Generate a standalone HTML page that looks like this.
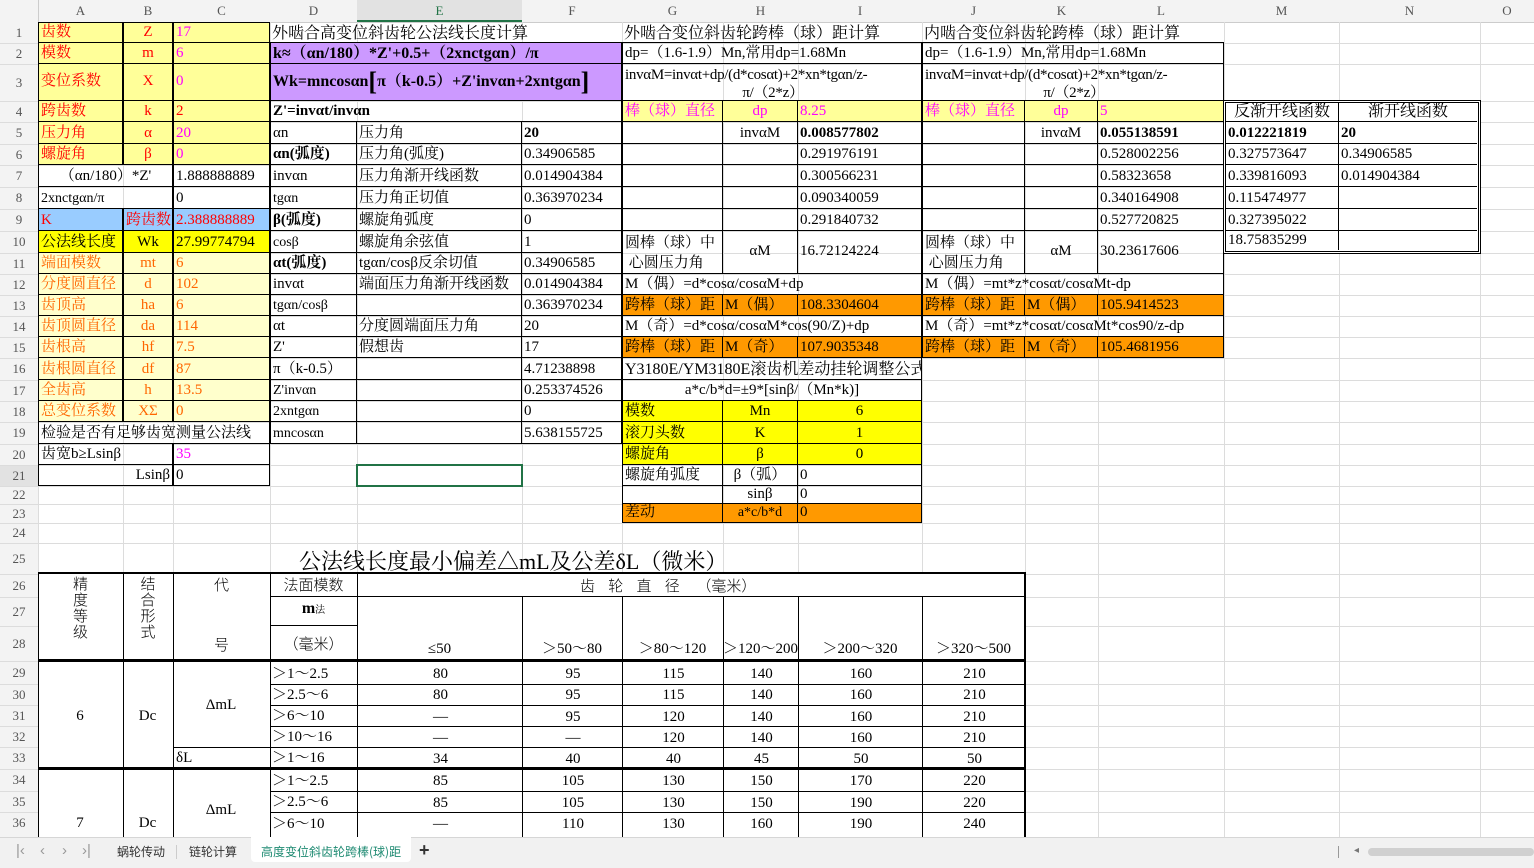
<!DOCTYPE html>
<html><head><meta charset="utf-8">
<style>
*{margin:0;padding:0}
body{width:1534px;height:867px;position:relative;overflow:hidden;background:#fff;font-family:"Liberation Serif","Noto Serif CJK SC",serif;font-size:15px;color:#000}
.gh{position:absolute;left:0;width:1534px;height:1px;background:#dcdcdc}
.gv{position:absolute;top:22px;width:1px;height:816px;background:#dcdcdc}
.c{position:absolute;box-sizing:border-box;border:1px solid #000;overflow:hidden;white-space:nowrap;display:flex;align-items:flex-end;padding:0 0 1px 2px;line-height:17px;margin:-1px 0 0 -1px}
.n{border:none}
.ct{justify-content:center;padding-left:0}
.r{justify-content:flex-end;padding-right:2px}
.y{background:#ffff99;color:#f00}
.yy{background:#ffff00}
.o{background:#ff9900}
.p{background:#cc99ff;font-weight:bold}
.lo{background:#ffffcc;color:#ff6600}
.m{color:#f0f}
.b{font-weight:bold}
.hd{position:absolute;top:0;height:22px;line-height:22px;text-align:center;color:#555;font-size:13px;font-family:"Liberation Serif",serif}
.rh{position:absolute;left:0;width:38px;text-align:center;color:#555;font-size:13px;font-family:"Liberation Serif",serif}
</style></head><body>
<div style="position:absolute;left:0;top:0;width:1534px;height:22px;background:#f3f3f3;border-bottom:1px solid #ccc"></div>
<div style="position:absolute;left:0;top:0;width:38px;height:867px;background:#f3f3f3;border-right:1px solid #ccc"></div>
<div style="position:absolute;left:357px;top:0;width:165px;height:22px;background:#e2e2e2;border-bottom:2px solid #217346;box-sizing:border-box"></div>
<div style="position:absolute;left:0;top:465px;width:38px;height:21px;background:#e2e2e2"></div>
<div class="hd" style="left:38px;width:85px">A</div><div class="hd" style="left:123px;width:50px">B</div><div class="hd" style="left:173px;width:97px">C</div><div class="hd" style="left:270px;width:87px">D</div><div class="hd" style="left:357px;width:165px;color:#217346">E</div><div class="hd" style="left:522px;width:100px">F</div><div class="hd" style="left:622px;width:101px">G</div><div class="hd" style="left:723px;width:75px">H</div><div class="hd" style="left:798px;width:124px">I</div><div class="hd" style="left:922px;width:103px">J</div><div class="hd" style="left:1025px;width:73px">K</div><div class="hd" style="left:1098px;width:126px">L</div><div class="hd" style="left:1224px;width:115px">M</div><div class="hd" style="left:1339px;width:141px">N</div><div class="hd" style="left:1480px;width:54px">O</div>
<div class="gv" style="left:38px"></div><div class="gv" style="left:123px"></div><div class="gv" style="left:173px"></div><div class="gv" style="left:270px"></div><div class="gv" style="left:357px"></div><div class="gv" style="left:522px"></div><div class="gv" style="left:622px"></div><div class="gv" style="left:723px"></div><div class="gv" style="left:798px"></div><div class="gv" style="left:922px"></div><div class="gv" style="left:1025px"></div><div class="gv" style="left:1098px"></div><div class="gv" style="left:1224px"></div><div class="gv" style="left:1339px"></div><div class="gv" style="left:1480px"></div>
<div class="gh" style="top:43px"></div><div class="gh" style="top:64px"></div><div class="gh" style="top:101px"></div><div class="gh" style="top:122px"></div><div class="gh" style="top:144px"></div><div class="gh" style="top:165px"></div><div class="gh" style="top:187px"></div><div class="gh" style="top:209px"></div><div class="gh" style="top:231px"></div><div class="gh" style="top:253px"></div><div class="gh" style="top:274px"></div><div class="gh" style="top:295px"></div><div class="gh" style="top:316px"></div><div class="gh" style="top:337px"></div><div class="gh" style="top:358px"></div><div class="gh" style="top:380px"></div><div class="gh" style="top:401px"></div><div class="gh" style="top:422px"></div><div class="gh" style="top:444px"></div><div class="gh" style="top:465px"></div><div class="gh" style="top:486px"></div><div class="gh" style="top:504px"></div><div class="gh" style="top:523px"></div><div class="gh" style="top:543px"></div><div class="gh" style="top:574px"></div><div class="gh" style="top:597px"></div><div class="gh" style="top:626px"></div><div class="gh" style="top:661px"></div><div class="gh" style="top:684px"></div><div class="gh" style="top:705px"></div><div class="gh" style="top:726px"></div><div class="gh" style="top:747px"></div><div class="gh" style="top:769px"></div><div class="gh" style="top:791px"></div><div class="gh" style="top:812px"></div>
<div class="rh" style="top:23px;line-height:20px">1</div><div class="rh" style="top:43px;line-height:21px">2</div><div class="rh" style="top:64px;line-height:37px">3</div><div class="rh" style="top:101px;line-height:21px">4</div><div class="rh" style="top:122px;line-height:22px">5</div><div class="rh" style="top:144px;line-height:21px">6</div><div class="rh" style="top:165px;line-height:22px">7</div><div class="rh" style="top:187px;line-height:22px">8</div><div class="rh" style="top:209px;line-height:22px">9</div><div class="rh" style="top:231px;line-height:22px">10</div><div class="rh" style="top:253px;line-height:21px">11</div><div class="rh" style="top:274px;line-height:21px">12</div><div class="rh" style="top:295px;line-height:21px">13</div><div class="rh" style="top:316px;line-height:21px">14</div><div class="rh" style="top:337px;line-height:21px">15</div><div class="rh" style="top:358px;line-height:22px">16</div><div class="rh" style="top:380px;line-height:21px">17</div><div class="rh" style="top:401px;line-height:21px">18</div><div class="rh" style="top:422px;line-height:22px">19</div><div class="rh" style="top:444px;line-height:21px">20</div><div class="rh" style="top:465px;line-height:21px">21</div><div class="rh" style="top:486px;line-height:18px">22</div><div class="rh" style="top:504px;line-height:19px">23</div><div class="rh" style="top:523px;line-height:20px">24</div><div class="rh" style="top:543px;line-height:31px">25</div><div class="rh" style="top:574px;line-height:23px">26</div><div class="rh" style="top:597px;line-height:29px">27</div><div class="rh" style="top:626px;line-height:35px">28</div><div class="rh" style="top:661px;line-height:23px">29</div><div class="rh" style="top:684px;line-height:21px">30</div><div class="rh" style="top:705px;line-height:21px">31</div><div class="rh" style="top:726px;line-height:21px">32</div><div class="rh" style="top:747px;line-height:22px">33</div><div class="rh" style="top:769px;line-height:22px">34</div><div class="rh" style="top:791px;line-height:21px">35</div><div class="rh" style="top:812px;line-height:22px">36</div>

<div class="c y" style="left:39px;top:23px;width:85px;height:21px">齿数</div><div class="c y ct" style="left:124px;top:23px;width:50px;height:21px">Z</div><div class="c y m" style="left:174px;top:23px;width:97px;height:21px">17</div>
<div class="c y" style="left:39px;top:43px;width:85px;height:22px">模数</div><div class="c y ct" style="left:124px;top:43px;width:50px;height:22px">m</div><div class="c y m" style="left:174px;top:43px;width:97px;height:22px">6</div>
<div class="c y" style="left:39px;top:64px;width:85px;height:38px;align-items:center">变位系数</div><div class="c y ct" style="left:124px;top:64px;width:50px;height:38px;align-items:center">X</div><div class="c y m" style="left:174px;top:64px;width:97px;height:38px;align-items:center">0</div>
<div class="c y" style="left:39px;top:101px;width:85px;height:22px">跨齿数</div><div class="c y ct" style="left:124px;top:101px;width:50px;height:22px">k</div><div class="c y" style="left:174px;top:101px;width:97px;height:22px">2</div>
<div class="c y" style="left:39px;top:122px;width:85px;height:23px">压力角</div><div class="c y ct" style="left:124px;top:122px;width:50px;height:23px">α</div><div class="c y m" style="left:174px;top:122px;width:97px;height:23px">20</div>
<div class="c y" style="left:39px;top:144px;width:85px;height:22px">螺旋角</div><div class="c y ct" style="left:124px;top:144px;width:50px;height:22px">β</div><div class="c y m" style="left:174px;top:144px;width:97px;height:22px">0</div>
<div class="c ct" style="left:39px;top:165px;width:135px;height:23px">（αn/180）*Z'</div><div class="c" style="left:174px;top:165px;width:97px;height:23px">1.888888889</div>
<div class="c" style="left:39px;top:187px;width:135px;height:23px;font-size:14px">2xnctgαn/π</div><div class="c" style="left:174px;top:187px;width:97px;height:23px">0</div>
<div class="c" style="left:39px;top:209px;width:85px;height:23px;background:#99ccff;color:#f00">K</div><div class="c" style="left:124px;top:209px;width:50px;height:23px;background:#99ccff;color:#f00">跨齿数</div><div class="c" style="left:174px;top:209px;width:97px;height:23px;background:#99ccff;color:#f00">2.388888889</div>
<div class="c yy" style="left:39px;top:231px;width:85px;height:23px">公法线长度</div><div class="c yy ct" style="left:124px;top:231px;width:50px;height:23px">Wk</div><div class="c yy" style="left:174px;top:231px;width:97px;height:23px">27.99774794</div>
<div class="c lo" style="left:39px;top:253px;width:85px;height:22px">端面模数</div><div class="c lo ct" style="left:124px;top:253px;width:50px;height:22px">mt</div><div class="c lo" style="left:174px;top:253px;width:97px;height:22px">6</div>
<div class="c lo" style="left:39px;top:274px;width:85px;height:22px">分度圆直径</div><div class="c lo ct" style="left:124px;top:274px;width:50px;height:22px">d</div><div class="c lo" style="left:174px;top:274px;width:97px;height:22px">102</div>
<div class="c lo" style="left:39px;top:295px;width:85px;height:22px">齿顶高</div><div class="c lo ct" style="left:124px;top:295px;width:50px;height:22px">ha</div><div class="c lo" style="left:174px;top:295px;width:97px;height:22px">6</div>
<div class="c lo" style="left:39px;top:316px;width:85px;height:22px">齿顶圆直径</div><div class="c lo ct" style="left:124px;top:316px;width:50px;height:22px">da</div><div class="c lo" style="left:174px;top:316px;width:97px;height:22px">114</div>
<div class="c lo" style="left:39px;top:337px;width:85px;height:22px">齿根高</div><div class="c lo ct" style="left:124px;top:337px;width:50px;height:22px">hf</div><div class="c lo" style="left:174px;top:337px;width:97px;height:22px">7.5</div>
<div class="c lo" style="left:39px;top:358px;width:85px;height:23px">齿根圆直径</div><div class="c lo ct" style="left:124px;top:358px;width:50px;height:23px">df</div><div class="c lo" style="left:174px;top:358px;width:97px;height:23px">87</div>
<div class="c lo" style="left:39px;top:380px;width:85px;height:22px">全齿高</div><div class="c lo ct" style="left:124px;top:380px;width:50px;height:22px">h</div><div class="c lo" style="left:174px;top:380px;width:97px;height:22px">13.5</div>
<div class="c lo" style="left:39px;top:401px;width:85px;height:22px">总变位系数</div><div class="c lo ct" style="left:124px;top:401px;width:50px;height:22px">XΣ</div><div class="c lo" style="left:174px;top:401px;width:97px;height:22px">0</div>
<div class="c" style="left:39px;top:422px;width:232px;height:23px">检验是否有足够齿宽测量公法线</div>
<div class="c" style="left:39px;top:444px;width:135px;height:22px">齿宽b≥Lsinβ</div><div class="c m" style="left:174px;top:444px;width:97px;height:22px">35</div>
<div class="c r" style="left:39px;top:465px;width:135px;height:22px">Lsinβ</div><div class="c" style="left:174px;top:465px;width:97px;height:22px">0</div>

<div class="c n" style="left:271px;top:23px;width:352px;height:21px;font-size:16px">外啮合高变位斜齿轮公法线长度计算</div>
<div class="c p" style="left:271px;top:43px;width:352px;height:22px;font-size:16px">k≈（αn/180）*Z'+0.5+（2xnctgαn）/π</div>
<div class="c p" style="left:271px;top:64px;width:352px;height:38px;align-items:center;font-size:16px">Wk=mncosαn<span style="font-size:26px">[</span>π（k-0.5）+Z'invαn+2xntgαn<span style="font-size:26px">]</span></div>
<div class="c b" style="left:271px;top:101px;width:352px;height:22px">Z'=invαt/invαn</div>
<div class="c" style="left:271px;top:122px;width:87px;height:23px">αn</div><div class="c" style="left:357px;top:122px;width:166px;height:23px">压力角</div><div class="c b" style="left:522px;top:122px;width:101px;height:23px">20</div>
<div class="c b" style="left:271px;top:144px;width:87px;height:22px">αn(弧度)</div><div class="c" style="left:357px;top:144px;width:166px;height:22px">压力角(弧度)</div><div class="c" style="left:522px;top:144px;width:101px;height:22px">0.34906585</div>
<div class="c" style="left:271px;top:165px;width:87px;height:23px">invαn</div><div class="c" style="left:357px;top:165px;width:166px;height:23px">压力角渐开线函数</div><div class="c" style="left:522px;top:165px;width:101px;height:23px">0.014904384</div>
<div class="c" style="left:271px;top:187px;width:87px;height:23px;font-size:14px">tgαn</div><div class="c" style="left:357px;top:187px;width:166px;height:23px">压力角正切值</div><div class="c" style="left:522px;top:187px;width:101px;height:23px">0.363970234</div>
<div class="c b" style="left:271px;top:209px;width:87px;height:23px">β(弧度)</div><div class="c" style="left:357px;top:209px;width:166px;height:23px">螺旋角弧度</div><div class="c" style="left:522px;top:209px;width:101px;height:23px">0</div>
<div class="c" style="left:271px;top:231px;width:87px;height:23px;font-size:14px">cosβ</div><div class="c" style="left:357px;top:231px;width:166px;height:23px">螺旋角余弦值</div><div class="c" style="left:522px;top:231px;width:101px;height:23px">1</div>
<div class="c b" style="left:271px;top:253px;width:87px;height:22px">αt(弧度)</div><div class="c" style="left:357px;top:253px;width:166px;height:22px">tgαn/cosβ反余切值</div><div class="c" style="left:522px;top:253px;width:101px;height:22px">0.34906585</div>
<div class="c" style="left:271px;top:274px;width:87px;height:22px">invαt</div><div class="c" style="left:357px;top:274px;width:166px;height:22px">端面压力角渐开线函数</div><div class="c" style="left:522px;top:274px;width:101px;height:22px">0.014904384</div>
<div class="c" style="left:271px;top:295px;width:87px;height:22px;font-size:14px">tgαn/cosβ</div><div class="c" style="left:357px;top:295px;width:166px;height:22px"></div><div class="c" style="left:522px;top:295px;width:101px;height:22px">0.363970234</div>
<div class="c" style="left:271px;top:316px;width:87px;height:22px">αt</div><div class="c" style="left:357px;top:316px;width:166px;height:22px">分度圆端面压力角</div><div class="c" style="left:522px;top:316px;width:101px;height:22px">20</div>
<div class="c" style="left:271px;top:337px;width:87px;height:22px">Z'</div><div class="c" style="left:357px;top:337px;width:166px;height:22px">假想齿</div><div class="c" style="left:522px;top:337px;width:101px;height:22px">17</div>
<div class="c" style="left:271px;top:358px;width:87px;height:23px">π（k-0.5）</div><div class="c" style="left:357px;top:358px;width:166px;height:23px"></div><div class="c" style="left:522px;top:358px;width:101px;height:23px">4.71238898</div>
<div class="c" style="left:271px;top:380px;width:87px;height:22px;font-size:14px">Z'invαn</div><div class="c" style="left:357px;top:380px;width:166px;height:22px"></div><div class="c" style="left:522px;top:380px;width:101px;height:22px">0.253374526</div>
<div class="c" style="left:271px;top:401px;width:87px;height:22px;font-size:14px">2xntgαn</div><div class="c" style="left:357px;top:401px;width:166px;height:22px"></div><div class="c" style="left:522px;top:401px;width:101px;height:22px">0</div>
<div class="c" style="left:271px;top:422px;width:87px;height:23px;font-size:14px">mncosαn</div><div class="c" style="left:357px;top:422px;width:166px;height:23px"></div><div class="c" style="left:522px;top:422px;width:101px;height:23px">5.638155725</div>
<div style="position:absolute;left:356px;top:464px;width:167px;height:23px;box-sizing:border-box;border:2px solid #217346"></div>

<div class="c n" style="left:623px;top:23px;width:300px;height:21px;font-size:16px">外啮合变位斜齿轮跨棒（球）距计算</div>
<div class="c" style="left:623px;top:43px;width:300px;height:22px">dp=（1.6-1.9）Mn,常用dp=1.68Mn</div>
<div class="c" style="left:623px;top:64px;width:300px;height:38px;display:block;white-space:nowrap;line-height:20px;padding-top:1px;font-size:15px;letter-spacing:-0.3px">invαM=invαt+dp/(d*cosαt)+2*xn*tgαn/z-<br><span style="display:block;text-align:center;margin-top:-2px">π/（2*z）</span></div>
<div class="c y m" style="left:623px;top:101px;width:101px;height:22px">棒（球）直径</div><div class="c y m ct" style="left:723px;top:101px;width:76px;height:22px">dp</div><div class="c y m" style="left:798px;top:101px;width:125px;height:22px">8.25</div>
<div class="c" style="left:623px;top:122px;width:101px;height:23px"></div><div class="c ct" style="left:723px;top:122px;width:76px;height:23px">invαM</div><div class="c b" style="left:798px;top:122px;width:125px;height:23px">0.008577802</div>
<div class="c" style="left:623px;top:144px;width:101px;height:22px"></div><div class="c" style="left:723px;top:144px;width:76px;height:22px"></div><div class="c" style="left:798px;top:144px;width:125px;height:22px">0.291976191</div>
<div class="c" style="left:623px;top:165px;width:101px;height:23px"></div><div class="c" style="left:723px;top:165px;width:76px;height:23px"></div><div class="c" style="left:798px;top:165px;width:125px;height:23px">0.300566231</div>
<div class="c" style="left:623px;top:187px;width:101px;height:23px"></div><div class="c" style="left:723px;top:187px;width:76px;height:23px"></div><div class="c" style="left:798px;top:187px;width:125px;height:23px">0.090340059</div>
<div class="c" style="left:623px;top:209px;width:101px;height:23px"></div><div class="c" style="left:723px;top:209px;width:76px;height:23px"></div><div class="c" style="left:798px;top:209px;width:125px;height:23px">0.291840732</div>
<div class="c" style="left:623px;top:231px;width:101px;height:44px;display:block;white-space:normal;line-height:20px;padding-top:2px">圆棒（球）中<br>&nbsp;心圆压力角</div><div class="c ct" style="left:723px;top:231px;width:76px;height:44px;align-items:center">αM</div><div class="c" style="left:798px;top:231px;width:125px;height:44px;align-items:center">16.72124224</div>
<div class="c" style="left:623px;top:274px;width:300px;height:22px">M（偶）=d*cosα/cosαM+dp</div>
<div class="c o" style="left:623px;top:295px;width:101px;height:22px">跨棒（球）距</div><div class="c o" style="left:723px;top:295px;width:76px;height:22px">M（偶）</div><div class="c o" style="left:798px;top:295px;width:125px;height:22px">108.3304604</div>
<div class="c" style="left:623px;top:316px;width:300px;height:22px">M（奇）=d*cosα/cosαM*cos(90/Z)+dp</div>
<div class="c o" style="left:623px;top:337px;width:101px;height:22px">跨棒（球）距</div><div class="c o" style="left:723px;top:337px;width:76px;height:22px">M（奇）</div><div class="c o" style="left:798px;top:337px;width:125px;height:22px">107.9035348</div>
<div class="c" style="left:623px;top:358px;width:300px;height:23px;font-size:16px">Y3180E/YM3180E滚齿机差动挂轮调整公式</div>
<div class="c ct" style="left:623px;top:380px;width:300px;height:22px">a*c/b*d=±9*[sinβ/（Mn*k)]</div>
<div class="c yy" style="left:623px;top:401px;width:101px;height:22px">模数</div><div class="c yy ct" style="left:723px;top:401px;width:76px;height:22px">Mn</div><div class="c yy ct" style="left:798px;top:401px;width:125px;height:22px">6</div>
<div class="c yy" style="left:623px;top:422px;width:101px;height:23px">滚刀头数</div><div class="c yy ct" style="left:723px;top:422px;width:76px;height:23px">K</div><div class="c yy ct" style="left:798px;top:422px;width:125px;height:23px">1</div>
<div class="c yy" style="left:623px;top:444px;width:101px;height:22px">螺旋角</div><div class="c yy ct" style="left:723px;top:444px;width:76px;height:22px">β</div><div class="c yy ct" style="left:798px;top:444px;width:125px;height:22px">0</div>
<div class="c" style="left:623px;top:465px;width:101px;height:22px">螺旋角弧度</div><div class="c ct" style="left:723px;top:465px;width:76px;height:22px">β（弧）</div><div class="c" style="left:798px;top:465px;width:125px;height:22px">0</div>
<div class="c" style="left:623px;top:486px;width:101px;height:19px"></div><div class="c ct" style="left:723px;top:486px;width:76px;height:19px;line-height:16px">sinβ</div><div class="c" style="left:798px;top:486px;width:125px;height:19px;line-height:16px">0</div>
<div class="c o" style="left:623px;top:504px;width:101px;height:20px">差动</div><div class="c o ct" style="left:723px;top:504px;width:76px;height:20px;font-size:14px">a*c/b*d</div><div class="c o" style="left:798px;top:504px;width:125px;height:20px">0</div>

<div class="c n" style="left:923px;top:23px;width:300px;height:21px;font-size:16px">内啮合变位斜齿轮跨棒（球）距计算</div>
<div class="c" style="left:923px;top:43px;width:302px;height:22px">dp=（1.6-1.9）Mn,常用dp=1.68Mn</div>
<div class="c" style="left:923px;top:64px;width:302px;height:38px;display:block;white-space:nowrap;line-height:20px;padding-top:1px;font-size:15px;letter-spacing:-0.3px">invαM=invαt+dp/(d*cosαt)+2*xn*tgαn/z-<br><span style="display:block;text-align:center;margin-top:-2px">π/（2*z）</span></div>
<div class="c y m" style="left:923px;top:101px;width:103px;height:22px">棒（球）直径</div><div class="c y m ct" style="left:1025px;top:101px;width:74px;height:22px">dp</div><div class="c y m" style="left:1098px;top:101px;width:127px;height:22px">5</div>
<div class="c" style="left:923px;top:122px;width:103px;height:23px"></div><div class="c ct" style="left:1025px;top:122px;width:74px;height:23px">invαM</div><div class="c b" style="left:1098px;top:122px;width:127px;height:23px">0.055138591</div>
<div class="c" style="left:923px;top:144px;width:103px;height:22px"></div><div class="c" style="left:1025px;top:144px;width:74px;height:22px"></div><div class="c" style="left:1098px;top:144px;width:127px;height:22px">0.528002256</div>
<div class="c" style="left:923px;top:165px;width:103px;height:23px"></div><div class="c" style="left:1025px;top:165px;width:74px;height:23px"></div><div class="c" style="left:1098px;top:165px;width:127px;height:23px">0.58323658</div>
<div class="c" style="left:923px;top:187px;width:103px;height:23px"></div><div class="c" style="left:1025px;top:187px;width:74px;height:23px"></div><div class="c" style="left:1098px;top:187px;width:127px;height:23px">0.340164908</div>
<div class="c" style="left:923px;top:209px;width:103px;height:23px"></div><div class="c" style="left:1025px;top:209px;width:74px;height:23px"></div><div class="c" style="left:1098px;top:209px;width:127px;height:23px">0.527720825</div>
<div class="c" style="left:923px;top:231px;width:103px;height:44px;display:block;white-space:normal;line-height:20px;padding-top:2px">圆棒（球）中<br>&nbsp;心圆压力角</div><div class="c ct" style="left:1025px;top:231px;width:74px;height:44px;align-items:center">αM</div><div class="c" style="left:1098px;top:231px;width:127px;height:44px;align-items:center">30.23617606</div>
<div class="c" style="left:923px;top:274px;width:302px;height:22px">M（偶）=mt*z*cosαt/cosαMt-dp</div>
<div class="c o" style="left:923px;top:295px;width:103px;height:22px">跨棒（球）距</div><div class="c o" style="left:1025px;top:295px;width:74px;height:22px">M（偶）</div><div class="c o" style="left:1098px;top:295px;width:127px;height:22px">105.9414523</div>
<div class="c" style="left:923px;top:316px;width:302px;height:22px">M（奇）=mt*z*cosαt/cosαMt*cos90/z-dp</div>
<div class="c o" style="left:923px;top:337px;width:103px;height:22px">跨棒（球）距</div><div class="c o" style="left:1025px;top:337px;width:74px;height:22px">M（奇）</div><div class="c o" style="left:1098px;top:337px;width:127px;height:22px">105.4681956</div>

<div style="position:absolute;left:1223px;top:100px;width:258px;height:154px;border:3px double #000;box-sizing:border-box;background:#fff"></div>
<div class="c ct" style="left:1227px;top:104px;width:113px;height:19px;border-top:none;border-left:none;font-size:16px">反渐开线函数</div><div class="c ct" style="left:1339px;top:104px;width:139px;height:19px;border-top:none;border-right:none;font-size:16px">渐开线函数</div>
<div class="c b" style="left:1227px;top:122px;width:113px;height:23px;border-left:none">0.012221819</div><div class="c b" style="left:1339px;top:122px;width:139px;height:23px;border-right:none">20</div>
<div class="c" style="left:1227px;top:144px;width:113px;height:22px;border-left:none">0.327573647</div><div class="c" style="left:1339px;top:144px;width:139px;height:22px;border-right:none">0.34906585</div>
<div class="c" style="left:1227px;top:165px;width:113px;height:23px;border-left:none">0.339816093</div><div class="c" style="left:1339px;top:165px;width:139px;height:23px;border-right:none">0.014904384</div>
<div class="c" style="left:1227px;top:187px;width:113px;height:23px;border-left:none">0.115474977</div><div class="c" style="left:1339px;top:187px;width:139px;height:23px;border-right:none"></div>
<div class="c" style="left:1227px;top:209px;width:113px;height:23px;border-left:none">0.327395022</div><div class="c" style="left:1339px;top:209px;width:139px;height:23px;border-right:none"></div>
<div class="c" style="left:1227px;top:231px;width:113px;height:20px;border-left:none;border-bottom:none">18.75835299</div><div class="c" style="left:1339px;top:231px;width:139px;height:20px;border-right:none;border-bottom:none"></div>

<div class="c n" style="left:298px;top:545px;width:600px;height:31px;font-size:22px;line-height:26px;padding-bottom:0">公法线长度最小偏差△mL及公差δL（微米）</div>
<div style="position:absolute;left:38px;top:572px;width:988px;height:266px;background:#fff;border-top:2px solid #000;border-left:1px solid #000;border-right:2px solid #000;box-sizing:border-box"></div>
<div style="position:absolute;left:38px;top:659px;width:988px;height:3px;background:#000"></div>
<div style="position:absolute;left:38px;top:767px;width:988px;height:3px;background:#000"></div>
<div style="position:absolute;left:123px;top:574px;width:1px;height:264px;background:#000"></div>
<div style="position:absolute;left:173px;top:574px;width:1px;height:264px;background:#000"></div>
<div style="position:absolute;left:270px;top:574px;width:1px;height:264px;background:#000"></div>
<div style="position:absolute;left:357px;top:574px;width:1px;height:264px;background:#000"></div>
<div style="position:absolute;left:522px;top:597px;width:1px;height:241px;background:#000"></div>
<div style="position:absolute;left:622px;top:597px;width:1px;height:241px;background:#000"></div>
<div style="position:absolute;left:723px;top:597px;width:1px;height:241px;background:#000"></div>
<div style="position:absolute;left:798px;top:597px;width:1px;height:241px;background:#000"></div>
<div style="position:absolute;left:922px;top:597px;width:1px;height:241px;background:#000"></div>
<div style="position:absolute;left:270px;top:596px;width:88px;height:1px;background:#000"></div>
<div style="position:absolute;left:357px;top:596px;width:668px;height:1px;background:#000"></div>
<div style="position:absolute;left:270px;top:625px;width:88px;height:1px;background:#000"></div>
<div style="position:absolute;left:270px;top:684px;width:755px;height:1px;background:#000"></div>
<div style="position:absolute;left:270px;top:705px;width:755px;height:1px;background:#000"></div>
<div style="position:absolute;left:270px;top:726px;width:755px;height:1px;background:#000"></div>
<div style="position:absolute;left:173px;top:747px;width:852px;height:1px;background:#000"></div>
<div style="position:absolute;left:270px;top:791px;width:755px;height:1px;background:#000"></div>
<div style="position:absolute;left:270px;top:812px;width:755px;height:1px;background:#000"></div>
<div style="position:absolute;left:38px;top:576px;width:85px;text-align:center;line-height:16px;font-family:'Noto Sans CJK SC',sans-serif;font-size:15px;font-weight:300">精<br>度<br>等<br>级</div>
<div style="position:absolute;left:123px;top:576px;width:50px;text-align:center;line-height:16px;font-family:'Noto Sans CJK SC',sans-serif;font-size:15px;font-weight:300">结<br>合<br>形<br>式</div>
<div style="position:absolute;left:173px;top:574px;width:97px;text-align:center;font-family:'Noto Sans CJK SC',sans-serif;font-size:15px;font-weight:300">代</div>
<div style="position:absolute;left:173px;top:634px;width:97px;text-align:center;font-family:'Noto Sans CJK SC',sans-serif;font-size:15px;font-weight:300">号</div>
<div style="position:absolute;left:270px;top:574px;width:87px;text-align:center;font-family:'Noto Sans CJK SC',sans-serif;font-size:15px;font-weight:300">法面模数</div>
<div style="position:absolute;left:270px;top:600px;width:87px;text-align:center;font-weight:bold;font-size:16px">m<span style="font-size:10px;font-weight:normal">法</span></div>
<div style="position:absolute;left:270px;top:633px;width:87px;text-align:center;font-family:'Noto Sans CJK SC',sans-serif;font-size:15px;font-weight:300">（毫米）</div>
<div style="position:absolute;left:580px;top:575px;white-space:pre;font-family:'Noto Sans CJK SC',sans-serif;font-size:15px;font-weight:300">齿    轮    直    径     （毫米）</div>
<div class="c n ct" style="left:358px;top:626px;width:165px;height:36px;padding-bottom:3px">≤50</div>
<div class="c n ct" style="left:523px;top:626px;width:100px;height:36px;padding-bottom:3px">＞50～80</div>
<div class="c n ct" style="left:623px;top:626px;width:101px;height:36px;padding-bottom:3px">＞80～120</div>
<div class="c n" style="left:724px;top:626px;width:75px;height:36px;padding-bottom:3px;padding-left:0">＞120～200</div>
<div class="c n ct" style="left:799px;top:626px;width:124px;height:36px;padding-bottom:3px">＞200～320</div>
<div class="c n ct" style="left:923px;top:626px;width:103px;height:36px;padding-bottom:3px">＞320～500</div>
<div class="c n" style="left:271px;top:662px;width:86px;height:23px">＞1～2.5</div>
<div class="c n" style="left:271px;top:685px;width:86px;height:21px">＞2.5～6</div>
<div class="c n" style="left:271px;top:706px;width:86px;height:21px">＞6～10</div>
<div class="c n" style="left:271px;top:727px;width:86px;height:21px">＞10～16</div>
<div class="c n" style="left:271px;top:748px;width:86px;height:21px">＞1～16</div>
<div class="c n" style="left:271px;top:770px;width:86px;height:22px">＞1～2.5</div>
<div class="c n" style="left:271px;top:792px;width:86px;height:21px">＞2.5～6</div>
<div class="c n" style="left:271px;top:813px;width:86px;height:22px">＞6～10</div>
<div class="c n" style="left:175px;top:748px;width:90px;height:21px">δL</div>
<div class="c n ct" style="left:174px;top:695px;width:96px;height:21px">ΔmL</div>
<div class="c n ct" style="left:174px;top:800px;width:96px;height:21px">ΔmL</div>
<div class="c n ct" style="left:39px;top:706px;width:84px;height:21px">6</div>
<div class="c n ct" style="left:124px;top:706px;width:49px;height:21px">Dc</div>
<div class="c n ct" style="left:39px;top:813px;width:84px;height:21px">7</div>
<div class="c n ct" style="left:124px;top:813px;width:49px;height:21px">Dc</div>
<div style="position:absolute;left:358px;top:664px;width:668px;font-size:15px;line-height:21.3px">
<div style="display:flex"><span style="width:165px;text-align:center">80</span><span style="width:100px;text-align:center">95</span><span style="width:101px;text-align:center">115</span><span style="width:75px;text-align:center">140</span><span style="width:124px;text-align:center">160</span><span style="width:103px;text-align:center">210</span></div>
<div style="display:flex"><span style="width:165px;text-align:center">80</span><span style="width:100px;text-align:center">95</span><span style="width:101px;text-align:center">115</span><span style="width:75px;text-align:center">140</span><span style="width:124px;text-align:center">160</span><span style="width:103px;text-align:center">210</span></div>
<div style="display:flex"><span style="width:165px;text-align:center">—</span><span style="width:100px;text-align:center">95</span><span style="width:101px;text-align:center">120</span><span style="width:75px;text-align:center">140</span><span style="width:124px;text-align:center">160</span><span style="width:103px;text-align:center">210</span></div>
<div style="display:flex"><span style="width:165px;text-align:center">—</span><span style="width:100px;text-align:center">—</span><span style="width:101px;text-align:center">120</span><span style="width:75px;text-align:center">140</span><span style="width:124px;text-align:center">160</span><span style="width:103px;text-align:center">210</span></div>
<div style="display:flex"><span style="width:165px;text-align:center">34</span><span style="width:100px;text-align:center">40</span><span style="width:101px;text-align:center">40</span><span style="width:75px;text-align:center">45</span><span style="width:124px;text-align:center">50</span><span style="width:103px;text-align:center">50</span></div>
<div style="display:flex;margin-top:1px"><span style="width:165px;text-align:center">85</span><span style="width:100px;text-align:center">105</span><span style="width:101px;text-align:center">130</span><span style="width:75px;text-align:center">150</span><span style="width:124px;text-align:center">170</span><span style="width:103px;text-align:center">220</span></div>
<div style="display:flex"><span style="width:165px;text-align:center">85</span><span style="width:100px;text-align:center">105</span><span style="width:101px;text-align:center">130</span><span style="width:75px;text-align:center">150</span><span style="width:124px;text-align:center">190</span><span style="width:103px;text-align:center">220</span></div>
<div style="display:flex"><span style="width:165px;text-align:center">—</span><span style="width:100px;text-align:center">110</span><span style="width:101px;text-align:center">130</span><span style="width:75px;text-align:center">160</span><span style="width:124px;text-align:center">190</span><span style="width:103px;text-align:center">240</span></div>
</div>

<div style="position:absolute;left:0;top:837px;width:1534px;height:30px;background:#f1f1f1;border-top:1px solid #d6d6d6"></div>
<div style="position:absolute;left:16px;top:842px;color:#999;font-family:'Liberation Sans',sans-serif;font-size:15px">|‹</div>
<div style="position:absolute;left:40px;top:842px;color:#999;font-family:'Liberation Sans',sans-serif;font-size:15px">‹</div>
<div style="position:absolute;left:62px;top:842px;color:#999;font-family:'Liberation Sans',sans-serif;font-size:15px">›</div>
<div style="position:absolute;left:82px;top:842px;color:#999;font-family:'Liberation Sans',sans-serif;font-size:15px">›|</div>
<div style="position:absolute;left:117px;top:843px;font-family:'Noto Sans CJK SC',sans-serif;font-size:12px;color:#333">蜗轮传动</div>
<div style="position:absolute;left:176px;top:845px;width:1px;height:14px;background:#ccc"></div>
<div style="position:absolute;left:189px;top:843px;font-family:'Noto Sans CJK SC',sans-serif;font-size:12px;color:#333">链轮计算</div>
<div style="position:absolute;left:251px;top:837px;width:160px;height:25px;background:#fff;border-radius:0 0 4px 4px"></div>
<div style="position:absolute;left:261px;top:843px;font-family:'Noto Sans CJK SC',sans-serif;font-size:12px;color:#1e8a72">高度变位斜齿轮跨棒(球)距</div>
<div style="position:absolute;left:419px;top:840px;font-family:'Liberation Sans',sans-serif;font-size:18px;font-weight:bold;color:#333">+</div>
<div style="position:absolute;left:1338px;top:846px;width:1px;height:12px;background:#999"></div>
<div style="position:absolute;left:1354px;top:845px;font-size:10px;color:#777">◂</div>
<div style="position:absolute;left:1368px;top:848px;width:166px;height:8px;background:#d0d0d0;border-radius:4px"></div>
</body></html>
